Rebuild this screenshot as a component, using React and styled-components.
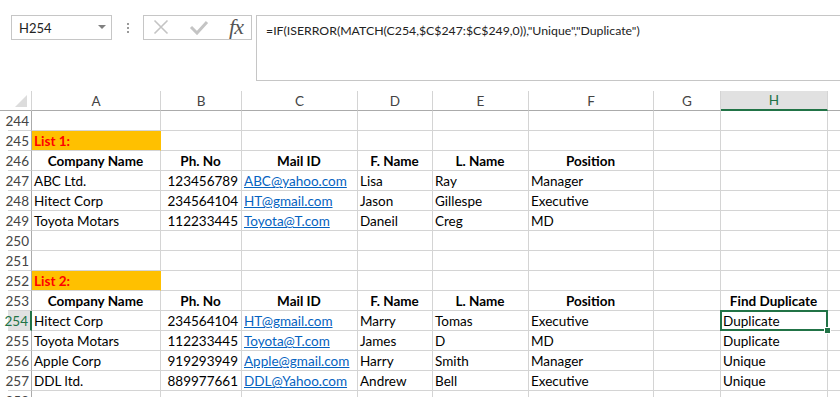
import styled, { createGlobalStyle, css } from "styled-components";

const GlobalStyle = createGlobalStyle`
  html, body {
    margin: 0;
    padding: 0;
    background: #ffffff;
  }
  body {
    font-family: "Lato", "Liberation Sans", sans-serif;
    overflow: hidden;
  }
`;

const COLS = [
    { key: "A", width: 129 },
    { key: "B", width: 81 },
    { key: "C", width: 116 },
    { key: "D", width: 75 },
    { key: "E", width: 96 },
    { key: "F", width: 125 },
    { key: "G", width: 67 },
    { key: "H", width: 107 },
    { key: "", width: 20 },
];

const HEADERS = ["Company Name", "Ph. No", "Mail ID", "F. Name", "L. Name", "Position"];

const list1 = [
    ["ABC Ltd.", "123456789", "ABC@yahoo.com", "Lisa", "Ray", "Manager"],
    ["Hitect Corp", "234564104", "HT@gmail.com", "Jason", "Gillespe", "Executive"],
    ["Toyota Motars", "112233445", "Toyota@T.com", "Daneil", "Creg", "MD"],
];

const list2 = [
    ["Hitect Corp", "234564104", "HT@gmail.com", "Marry", "Tomas", "Executive", "", "Duplicate"],
    ["Toyota Motars", "112233445", "Toyota@T.com", "James", "D", "MD", "", "Duplicate"],
    ["Apple Corp", "919293949", "Apple@gmail.com", "Harry", "Smith", "Manager", "", "Unique"],
    ["DDL ltd.", "889977661", "DDL@Yahoo.com", "Andrew", "Bell", "Executive", "", "Unique"],
];

function dataRow(n, values) {
    return {
        n,
        cells: values.map((v, i) => ({
            text: v,
            align: i === 1 ? "right" : "left",
            link: i === 2,
        })),
    };
}

function headerRow(n, extra) {
    const cells = HEADERS.map((h) => ({ text: h, align: "center", bold: true }));
    if (extra) {
        cells.push({ text: "" }, { text: extra, align: "center", bold: true });
    }
    return { n, cells };
}

const ROWS = [
    { n: 244, cells: [] },
    { n: 245, cells: [{ text: "List 1:", fill: true }] },
    headerRow(246),
    ...list1.map((r, i) => dataRow(247 + i, r)),
    { n: 250, cells: [] },
    { n: 251, cells: [] },
    { n: 252, cells: [{ text: "List 2:", fill: true }] },
    headerRow(253, "Find Duplicate"),
    ...list2.map((r, i) => dataRow(254 + i, r)),
    { n: 258, cells: [] },
];

const SELECTED_ROW = 254;
const SELECTED_COL = "H";

export default function App() {
    return (
        <Page>
            <GlobalStyle />
            <FormulaBar>
                <NameBox>
                    <span>H254</span>
                    <svg width="8" height="5" viewBox="0 0 8 5">
                        <polygon points="0,0 8,0 4,4" fill="#808080" />
                    </svg>
                </NameBox>
                <Grip>
                    <i />
                    <i />
                    <i />
                </Grip>
                <FxBox>
                    <svg width="16" height="16" viewBox="0 0 16 16">
                        <path d="M1.5 1.5 L14.5 14.5 M14.5 1.5 L1.5 14.5" stroke="#c4c4c4" strokeWidth="1.6" fill="none" />
                    </svg>
                    <svg width="20" height="16" viewBox="0 0 20 16">
                        <path d="M2 8 L8 14 L18 3" stroke="#c4c4c4" strokeWidth="3" fill="none" />
                    </svg>
                    <Fx>fx</Fx>
                </FxBox>
                <FormulaBox>=IF(ISERROR(MATCH(C254,$C$247:$C$249,0)),"Unique","Duplicate")</FormulaBox>
            </FormulaBar>
            <Sheet>
                <Corner>
                    <svg width="12" height="12" viewBox="0 0 12 12">
                        <polygon points="12,0 12,12 0,12" fill="#dcdcdc" />
                    </svg>
                </Corner>
                {COLS.map((c, i) => (
                    <ColHead key={i} $selected={c.key === SELECTED_COL}>
                        {c.key}
                    </ColHead>
                ))}
                {ROWS.map((row) => (
                    <Row key={row.n} row={row} />
                ))}
            </Sheet>
        </Page>
    );
}

function Row({ row }) {
    return (
        <>
            <RowHead $selected={row.n === SELECTED_ROW}>{row.n}</RowHead>
            {COLS.map((c, i) => {
                const cell = row.cells[i] || { text: "" };
                const selected = row.n === SELECTED_ROW && c.key === SELECTED_COL;
                return (
                    <Cell
                        key={i}
                        $align={cell.align}
                        $bold={cell.bold}
                        $fill={cell.fill}
                        $link={cell.link}
                        $selected={selected}
                    >
                        {cell.link ? <a>{cell.text}</a> : cell.text}
                    </Cell>
                );
            })}
        </>
    );
}

const Page = styled.div`
    width: 840px;
    height: 405px;
    overflow: hidden;
    background: #ffffff;
`;

const FormulaBar = styled.div`
    height: 91px;
    box-sizing: border-box;
    padding: 15px 0 0 11px;

    display: flex;
    align-items: flex-start;
`;

const NameBox = styled.div`
    width: 101px;
    height: 25px;
    box-sizing: border-box;
    border: 1px solid #c6c6c6;
    padding: 0 5px 0 7px;

    display: flex;
    align-items: center;
    justify-content: space-between;

    font-size: 13px;
    color: #222;
`;

const Grip = styled.div`
    width: 31px;
    height: 25px;

    display: flex;
    flex-direction: column;
    align-items: center;
    justify-content: center;
    gap: 2px;

    i {
        width: 2px;
        height: 2px;
        background: #9a9a9a;
    }
`;

const FxBox = styled.div`
    width: 109px;
    height: 25px;
    box-sizing: border-box;
    border: 1px solid #c6c6c6;
    padding: 0 8px 2px 9px;

    display: flex;
    align-items: center;
    justify-content: space-between;
`;

const Fx = styled.span`
    font-family: "Liberation Serif", "DejaVu Serif", serif;
    font-style: italic;
    font-size: 22px;
    line-height: 1;
    color: #555;
    letter-spacing: -1px;
`;

const FormulaBox = styled.div`
    flex: 1;
    height: 66px;
    margin-left: 4px;
    box-sizing: border-box;
    border: 1px solid #c6c6c6;
    border-right: none;
    padding: 7px 0 0 9px;

    font-size: 12.3px;
    color: #222;
    white-space: nowrap;
`;

const Sheet = styled.div`
    display: grid;
    grid-template-columns: 32px ${COLS.map((c) => c.width + "px").join(" ")};
    grid-auto-rows: 20px;
    height: 306px;
    overflow: hidden;

    font-size: 13.5px;
    color: #000;
`;

const Corner = styled.div`
    box-sizing: border-box;
    border-bottom: 1px solid #ababab;
    border-right: 1px solid #d4d4d4;
    padding: 0 4px 3px 0;

    display: flex;
    align-items: flex-end;
    justify-content: flex-end;
`;

const ColHead = styled.div`
    box-sizing: border-box;
    border-right: 1px solid #d4d4d4;
    border-bottom: 1px solid #ababab;

    display: flex;
    align-items: center;
    justify-content: center;

    color: #444;

    ${(p) =>
        p.$selected &&
        css`
            background: #e1e1e1;
            color: #217346;
            border-bottom: 2px solid #217346;
        `}
`;

const RowHead = styled.div`
    box-sizing: border-box;
    margin-left: 8px;
    border-right: 1px solid #ababab;
    border-bottom: 1px solid #d4d4d4;
    padding: 0 2px 1px 0;

    display: flex;
    align-items: flex-end;
    justify-content: flex-end;

    color: #444;

    ${(p) =>
        p.$selected &&
        css`
            background: #e1e1e1;
            color: #217346;
            border-right: 2px solid #217346;
        `}
`;

const Cell = styled.div`
    position: relative;
    box-sizing: border-box;
    border-right: 1px solid #d4d4d4;
    border-bottom: 1px solid #d4d4d4;
    padding: 0 3px 1px 2px;

    display: flex;
    align-items: flex-end;
    justify-content: ${(p) =>
        p.$align === "right" ? "flex-end" : p.$align === "center" ? "center" : "flex-start"};

    white-space: nowrap;
    font-weight: ${(p) => (p.$bold ? 700 : 400)};
    overflow: visible;

    a {
        color: #0563c1;
        text-decoration: underline;
    }

    ${(p) =>
        p.$fill &&
        css`
            background: #ffc000;
            color: #ff0000;
            font-weight: 700;
            border-right-color: #ffc000;
        `}

    ${(p) =>
        p.$selected &&
        css`
            &::after {
                content: "";
                position: absolute;
                left: -1px;
                top: -1px;
                right: -1px;
                bottom: -1px;
                border: 2px solid #217346;
            }
            &::before {
                content: "";
                position: absolute;
                right: -4px;
                bottom: -4px;
                width: 5px;
                height: 5px;
                background: #217346;
                border: 1px solid #ffffff;
                z-index: 2;
            }
        `}
`;
